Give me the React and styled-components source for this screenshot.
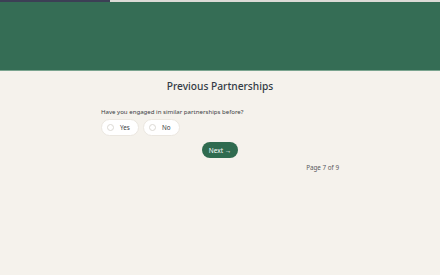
import React, { useState } from "react";
import styled, { createGlobalStyle } from "styled-components";

const Global = createGlobalStyle`
  html, body { margin: 0; padding: 0; background: #f5f2ec; }
  body { font-family: "Noto Sans", "Open Sans", sans-serif; }
  * { box-sizing: border-box; }
`;

const Page = styled.div`
  width: 440px;
  min-height: 275px;
  background: #f5f2ec;
  display: flex;
  flex-direction: column;
`;

const Progress = styled.div`
  height: 2px;
  background: #dcdad6;
  display: flex;
`;

const ProgressFill = styled.div`
  height: 100%;
  background: #3c3f55;
`;

const Hero = styled.header`
  height: 69px;
  background: #356d55;
  border-bottom: 1px solid #7aa48f;
`;

const Content = styled.main`
  width: 238px;
  margin: 0 auto;
  display: flex;
  flex-direction: column;
  padding-top: 8px;
`;

const Title = styled.h1`
  margin: 0;
  text-align: center;
  font-size: 10.2px;
  font-weight: 500;
  color: #333b45;
  line-height: 15px;
`;

const Question = styled.p`
  margin: 13px 0 0;
  font-size: 6.1px;
  color: #3a3d44;
  line-height: 9px;
`;

const Options = styled.div`
  display: flex;
  gap: 4px;
  margin-top: 3px;
`;

const Pill = styled.label`
  display: flex;
  align-items: center;
  gap: 6px;
  height: 17px;
  width: ${(p) => p.$w}px;
  padding: 0 5px;
  border-radius: 9px;
  background: #ffffff;
  border: 1px solid #ebe7e0;
  font-size: 6.3px;
  color: #3a3d44;
  cursor: pointer;
`;

const Radio = styled.span`
  width: 7px;
  height: 7px;
  border-radius: 50%;
  border: 1px solid #dcd9d3;
  background: #fff;
  flex: none;
`;

const NextRow = styled.div`
  display: flex;
  justify-content: center;
  margin-top: 6px;
`;

const NextButton = styled.button`
  height: 16px;
  width: 36px;
  border: none;
  border-radius: 8px;
  background: #2f6b4f;
  color: #fff;
  font-family: inherit;
  font-size: 6.5px;
  padding: 0;
  display: flex;
  align-items: center;
  justify-content: center;
  gap: 2px;
`;

const PageInfo = styled.div`
  text-align: right;
  margin-top: 5px;
  font-size: 6.3px;
  line-height: 9px;
  color: #58595c;
`;

export default function App() {
  const [choice, setChoice] = useState(null);
  return (
    <>
      <Global />
      <Page>
        <Progress>
          <ProgressFill style={{ width: "25%" }} />
        </Progress>
        <Hero />
        <Content>
          <Title>Previous Partnerships</Title>
          <Question>Have you engaged in similar partnerships before?</Question>
          <Options>
            <Pill $w={38} onClick={() => setChoice("yes")}>
              <Radio />
              Yes
            </Pill>
            <Pill $w={37} onClick={() => setChoice("no")}>
              <Radio />
              No
            </Pill>
          </Options>
          <NextRow>
            <NextButton>Next →</NextButton>
          </NextRow>
          <PageInfo>Page 7 of 9</PageInfo>
        </Content>
      </Page>
    </>
  );
}
